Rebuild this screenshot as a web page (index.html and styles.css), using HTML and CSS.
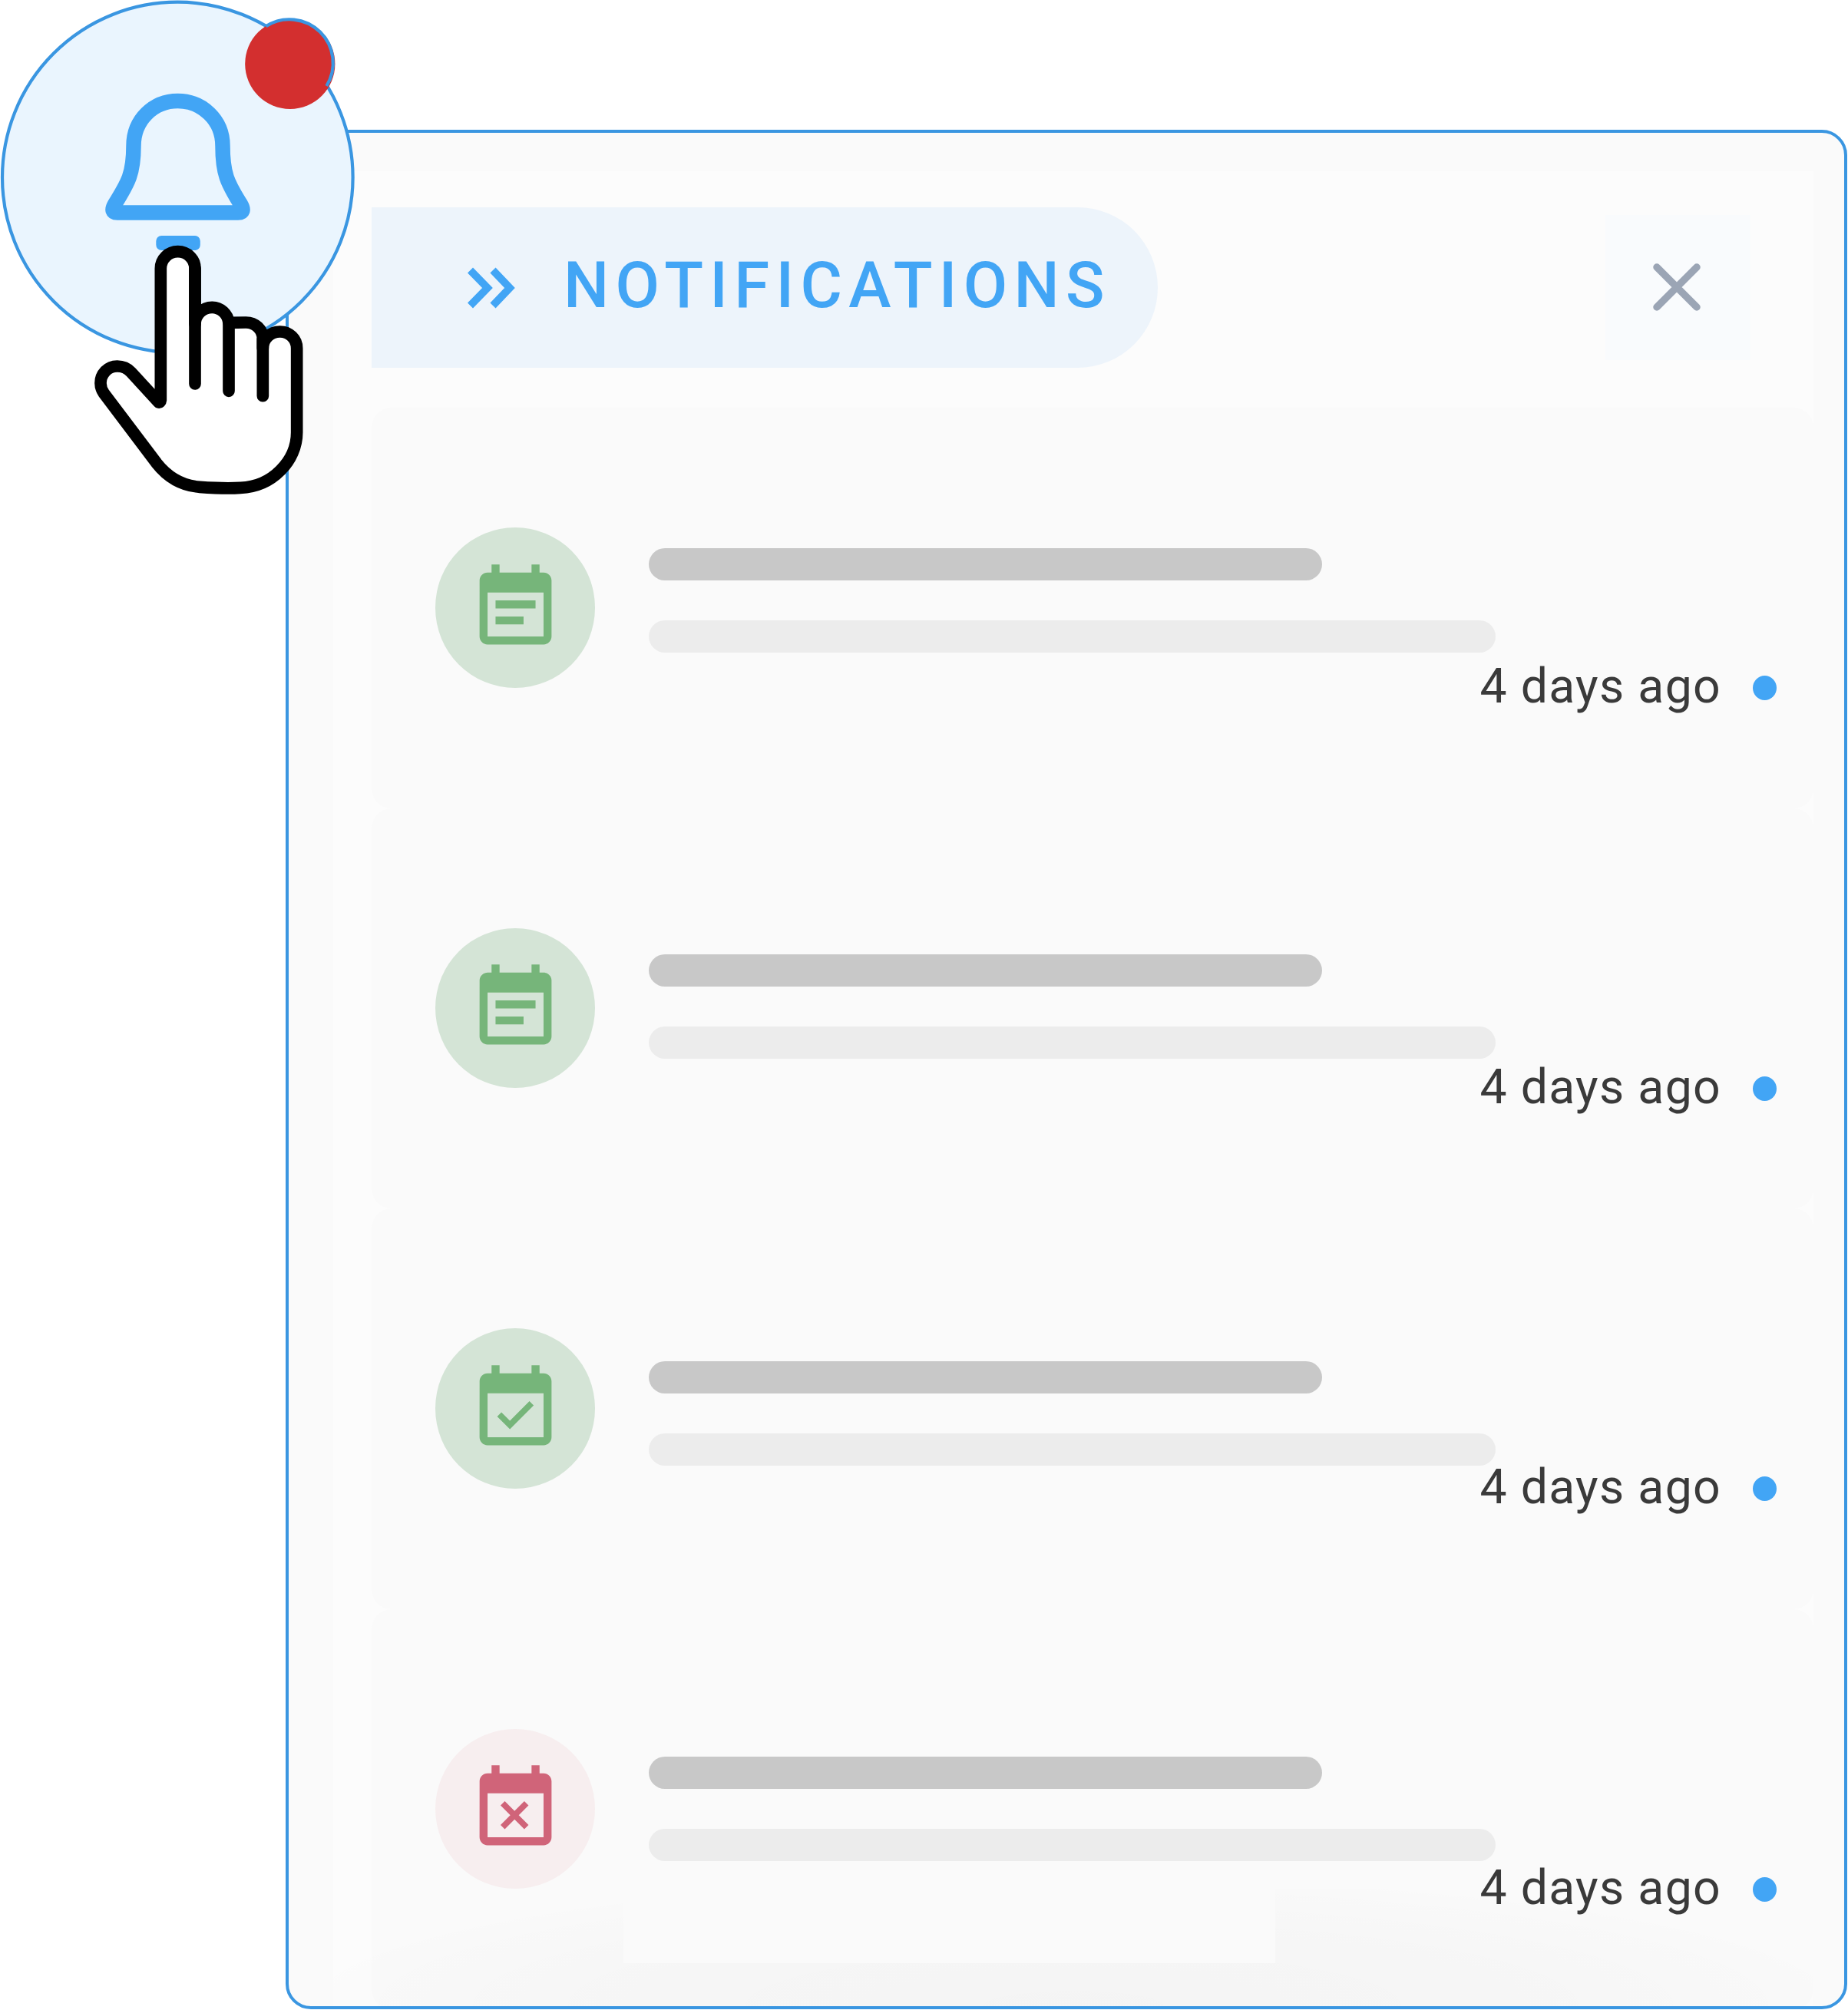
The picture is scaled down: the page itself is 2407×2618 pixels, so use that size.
FILE: index.html
```html
<!DOCTYPE html>
<html lang="en">
<head>
<meta charset="utf-8">
<title>Notifications</title>
<link rel="stylesheet" href="styles.css">
</head>
<body>
<svg class="defs" aria-hidden="true">
  <symbol id="event-note" viewBox="0 0 24 24"><path d="M17 10H7v2h10v-2zm2-7h-1V1h-2v2H8V1H6v2H5c-1.11 0-1.99.9-1.99 2L3 19c0 1.1.89 2 2 2h14c1.1 0 2-.9 2-2V5c0-1.1-.9-2-2-2zm0 16H5V8h14v11zm-5-5H7v2h7v-2z"/></symbol>
  <symbol id="event-available" viewBox="0 0 24 24"><path d="M16.53 11.06L15.47 10l-4.88 4.88-2.12-2.12-1.06 1.06L10.59 17l5.94-5.94zM19 3h-1V1h-2v2H8V1H6v2H5c-1.11 0-1.99.9-1.99 2L3 19c0 1.1.89 2 2 2h14c1.1 0 2-.9 2-2V5c0-1.1-.9-2-2-2zm0 16H5V8h14v11z"/></symbol>
  <symbol id="event-busy" viewBox="0 0 24 24"><path d="M9.31 17l2.44-2.44L14.19 17l1.06-1.06-2.44-2.44 2.44-2.44L14.19 10l-2.44 2.44L9.31 10l-1.06 1.06 2.44 2.44-2.44 2.44L9.31 17zM19 3h-1V1h-2v2H8V1H6v2H5c-1.11 0-1.99.9-1.99 2L3 19c0 1.1.89 2 2 2h14c1.1 0 2-.9 2-2V5c0-1.1-.9-2-2-2zm0 16H5V8h14v11z"/></symbol>
</svg>

<main class="panel">
  <section class="surface">
    <header class="header">
      <div class="title-pill">
        <svg class="chevrons" viewBox="0 0 64 54" aria-hidden="true"><path d="M3.500 4 L26 27 L3.500 50 M33 4 L55 27 L33 50"/></svg>
        <h1 class="title">NOTIFICATIONS</h1>
      </div>
      <button class="close" aria-label="Close"><svg class="close-icon" viewBox="0 0 64 64"><path d="M6 6 L58 58 M58 6 L6 58"/></svg></button>
    </header>

    <article class="card">
      <div class="avatar"><svg class="icon"><use href="#event-note"/></svg></div>
      <div class="lines"><span class="line line-strong"></span><span class="line line-soft"></span></div>
      <div class="meta"><time class="time">4 days ago</time><span class="dot"></span></div>
    </article>
    <article class="card card-second">
      <div class="avatar"><svg class="icon"><use href="#event-note"/></svg></div>
      <div class="lines"><span class="line line-strong"></span><span class="line line-soft"></span></div>
      <div class="meta"><time class="time">4 days ago</time><span class="dot"></span></div>
    </article>
    <article class="card card-third">
      <div class="avatar"><svg class="icon"><use href="#event-available"/></svg></div>
      <div class="lines"><span class="line line-strong"></span><span class="line line-soft"></span></div>
      <div class="meta"><time class="time">4 days ago</time><span class="dot"></span></div>
    </article>
    <article class="card card-fourth">
      <div class="avatar avatar-busy"><svg class="icon"><use href="#event-busy"/></svg></div>
      <div class="lines"><span class="line line-strong"></span><span class="line line-soft"></span></div>
      <div class="meta"><time class="time">4 days ago</time><span class="dot"></span></div>
    </article>
  </section>
  <div class="fade"><div class="fade-patch"></div></div>
</main>

<svg class="bell" viewBox="0 0 480 660" aria-hidden="true">
  <circle class="bell-disc" cx="231.3" cy="231" r="228.3"/>
  <path class="bell-body" d="M231.5 131.5 C200 131.5 174 156 174 190 C174 226 167 238 149.500 266 Q143 277 153 277 H310 Q320 277 313.500 266 C296 238 290 226 290 190 C290 156 263 131.5 231.5 131.5Z"/>
  <rect class="bell-clapper" x="203.300" y="307" width="57.500" height="19" rx="7"/>
  <circle class="badge" cx="377.800" cy="83.300" r="58.600"/>
  <path class="badge-ring" d="M346.300 34.300 A56.800 56.800 0 0 1 425.300 112"/>
  <g class="hand" transform="translate(100 280) scale(.33333)">
    <path d="M320 732 L212 614 C197 598 179 591 158 591 C121 591 93 621 93 657 C93 671 97 684 106 697 L312 970 C358 1028 413 1058 480 1063 Q580 1070 640 1066 C764 1062 860 960 860 850 V521 C860 484 830 456 794 456 C757 456 727 484 727 521 V484 C727 447 697 420 661 420 L594 421 C590 387 562 361 529 361 C492 361 462 390 462 427 V209 C462 172 432 143 395 143 C358 143 328 172 328 209 V723 Q327 733 320 732Z"/>
    <path d="M462 209 V660 M594 421 V688 M727 484 V707"/>
  </g>
</svg>
</body>
</html>
```
FILE: styles.css
```css
* { box-sizing: border-box; }
body {
  margin: 0;
  width: 2407px;
  height: 2618px;
  padding: 169px 0 0 372px;
  overflow: hidden;
  position: relative;
  background: #fff;
  font-family: Roboto, "Liberation Sans", sans-serif;
}
.defs { position: absolute; width: 0; height: 0; }

.panel {
  position: relative;
  width: 2034px;
  height: 2448px;
  padding: 50px 40px 0 58px;
  border: 4px solid #3a96e1;
  border-radius: 33px;
  background: #fafafa;
  overflow: hidden;
}
.surface {
  height: 2394px;
  padding-left: 50px;
  background: #fcfcfc;
}

.header {
  display: flex;
  justify-content: space-between;
  align-items: center;
  height: 308px;
  padding: 47px 82px 52px 0;
}
.title-pill {
  display: flex;
  align-items: center;
  gap: 61px;
  width: 1024px;
  height: 209px;
  padding-left: 125px;
  border-radius: 0 104.500px 104.500px 0;
  background: #edf4fb;
}
.chevrons { width: 64px; height: 54px; flex: none; }
.chevrons path { fill: none; stroke: #42a5f5; stroke-width: 9.800; }
.title {
  margin: 0 0 5px;
  color: #42a5f5;
  font-size: 83.400px;
  font-weight: 500;
  line-height: 100px;
  letter-spacing: 8.300px;
  white-space: nowrap;
}
.close {
  display: flex;
  align-items: center;
  justify-content: center;
  width: 189px;
  height: 189px;
  padding: 0 4px 2px 0;
  border: 0;
  background: #f9fbfd;
}
.close-icon { width: 64px; height: 64px; }
.close-icon path { fill: none; stroke: #9ba5b5; stroke-width: 9.500; stroke-linecap: round; }

.card {
  display: flex;
  height: 521.600px;
  padding: 156px 50px 0 83px;
  border-radius: 26px;
  background: #fafafa;
}
.avatar {
  display: flex;
  align-items: center;
  justify-content: center;
  flex: none;
  width: 208px;
  height: 208.500px;
  padding-top: 1.500px;
  border-radius: 50%;
  background: #d4e4d6;
  color: #76b57a;
}
.avatar-busy { background: #f7eeef; color: #d06479; }
.icon { width: 125px; height: 125px; fill: currentColor; }
.lines {
  display: flex;
  flex-direction: column;
  gap: 52px;
  flex: none;
  width: 1103px;
  margin: 26.500px 0 0 70px;
}
.card-second .lines { margin-top: 34.500px; }
.card-third .lines { margin-top: 43px; }
.card-fourth .lines { margin-top: 36px; }
.line { height: 42px; border-radius: 21px; }
.line-strong { width: 877px; background: #c8c8c8; }
.line-soft { width: 1103px; background: #ececec; }
.meta {
  display: flex;
  align-items: center;
  align-self: flex-start;
  gap: 41px;
  flex: none;
  margin: 169px 0 0 -20.500px;
}
.time {
  color: #3a3a3a;
  font-size: 62.500px;
  line-height: 76px;
  letter-spacing: 1.300px;
  white-space: nowrap;
}
.dot {
  width: 31px;
  height: 32px;
  margin-top: 4px;
  border-radius: 50%;
  background: #42a5f5;
}

.fade {
  position: absolute;
  left: 58px;
  bottom: 0;
  width: 1928px;
  height: 153px;
  background: radial-gradient(ellipse 1010px 170px at 50% 100%, rgba(0, 0, 0, .024), rgba(0, 0, 0, .014) 60%, rgba(0, 0, 0, .004) 96%, transparent);
}
.fade-patch { width: 849px; height: 97px; margin-left: 378px; background: #fafafa; }

.bell { position: absolute; left: 0; top: 0; width: 480px; height: 660px; }
.bell-disc { fill: #eaf5fe; stroke: #3a96e1; stroke-width: 4.200; }
.bell-body { fill: none; stroke: #42a5f5; stroke-width: 19.500; stroke-linejoin: round; }
.bell-clapper { fill: #42a5f5; }
.badge { fill: #d32f2f; }
.badge-ring { fill: none; stroke: #3a96e1; stroke-width: 4.200; }
.hand { fill: #fff; stroke: #000; stroke-width: 47; stroke-linecap: round; stroke-linejoin: round; }
```
